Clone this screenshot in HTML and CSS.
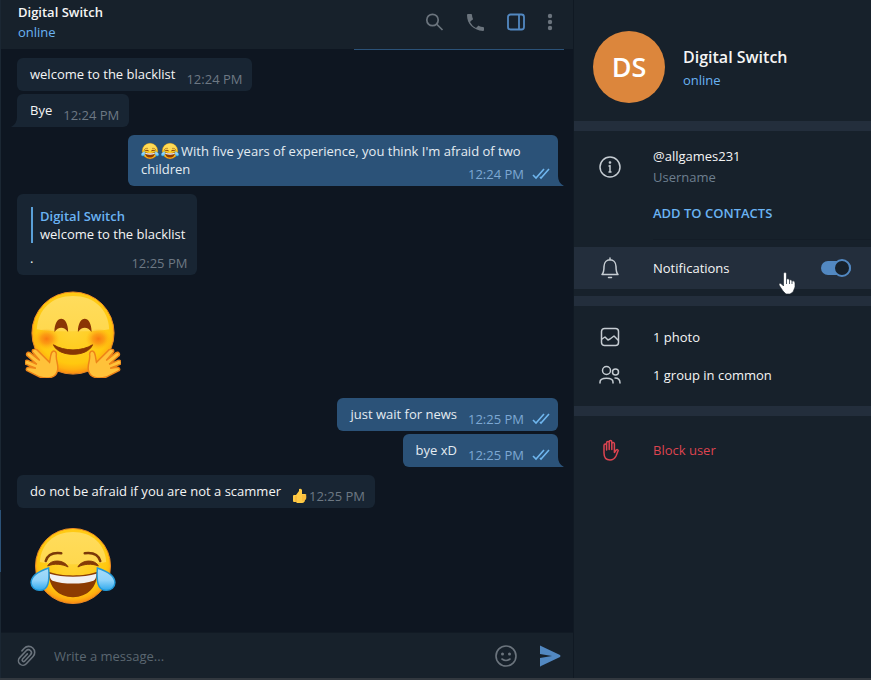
FILE: index.html
```
<!DOCTYPE html>
<html lang="en">
<head>
<meta charset="utf-8">
<title>Digital Switch</title>
<link rel="stylesheet" href="styles.css">
</head>
<body>
<svg class="defs" aria-hidden="true">
  <defs>
    <radialGradient id="face" cx="50%" cy="42%" r="58%">
      <stop offset="0" stop-color="#ffd53a"/><stop offset=".78" stop-color="#ffc80f"/><stop offset=".9" stop-color="#ffb010"/><stop offset="1" stop-color="#f98a12"/>
    </radialGradient>
    <linearGradient id="shine" x1="0" y1="0" x2="0" y2="1">
      <stop offset="0" stop-color="#ffdc5c"/><stop offset="1" stop-color="#ffd84e"/>
    </linearGradient>
    <radialGradient id="blush">
      <stop offset="0" stop-color="#f97a10"/><stop offset=".45" stop-color="#fb8d12" stop-opacity=".75"/><stop offset="1" stop-color="#ffae10" stop-opacity="0"/>
    </radialGradient>
    <linearGradient id="tear" x1="0" y1="0" x2="0" y2="1">
      <stop offset="0" stop-color="#a9dcf8"/><stop offset=".55" stop-color="#8fd3fa"/><stop offset="1" stop-color="#2fa9ec"/>
    </linearGradient>
    <symbol id="joy" viewBox="0 0 88 80">
      <circle cx="44" cy="40" r="38.500" fill="url(#face)" stroke="#ee8a22"/>
      <path d="M10 36C11 17 25 5 44 5s33 12 34 31c-12 3-56 3-68 0z" fill="url(#shine)"/>
      <path d="M16 35c2-7 8-9 16-8M72 35c-2-7-8-9-16-8" fill="none" stroke="#7a3808" stroke-width="2.500" stroke-linecap="round"/>
      <path d="M18 40c3-7 17-7 21 1-6-3-14-4-21-1zM49 41c4-8 18-8 21-1-7-3-15-2-21 1z" fill="#853b06" stroke="#853b06"/>
      <path d="M19 46c13 5 37 5 50 0 0 16-10 26-25 26S19 62 19 46z" fill="#8c3b02"/>
      <path d="M20 48c13 4 35 4 48 0 0 4-1 6-3 7-11 4-31 4-42 0-2-1-3-3-3-7z" fill="#f1f0f2"/>
      <path d="M19 42C10 45 1 49 1 57c0 5 4 8 9 8 9 0 10-10 9-23zM69 42c9 3 18 7 18 15 0 5-4 8-9 8-9 0-10-10-9-23z" fill="url(#tear)" stroke="#2398d6" stroke-width="1.500"/>
    </symbol>
    <symbol id="hand-left" viewBox="0 0 36 30">
      <path d="M31 3c-5-3-5 7-6 11L12 1C9-1 6 2 8 4l7 8L5 4C2 3 0 6 3 8l9 8-9-4c-3-1-5 3-2 4l10 4-7-1c-3 0-4 3-1 4l12 6c8 2 16 1 18-6 2-6-2-11-1-17 0-1 0-2-1-3z" fill="#ffc23a" stroke="#ee8418" stroke-width="1.500"/>
    </symbol>
    <symbol id="hug" viewBox="0 0 98 90">
      <circle cx="49" cy="43" r="42" fill="url(#face)" stroke="#ee8a22"/>
      <path d="M12 39C13 18 28 5 49 5s36 13 37 34c-15 3-59 3-74 0z" fill="url(#shine)"/>
      <ellipse cx="22" cy="49" rx="13" ry="11" fill="url(#blush)"/>
      <ellipse cx="75" cy="49" rx="13" ry="11" fill="url(#blush)"/>
      <path d="M30 42c0-18 14-18 14 0-4-6-10-6-14 0zM54 42c0-18 14-18 14 0-4-6-10-6-14 0z" fill="#8a3504"/>
      <path d="M29 55c11 7 29 7 40 0-5 13-35 13-40 0z" fill="#873504" stroke="#873504" stroke-linejoin="round"/>
      <use href="#hand-left" x="0" y="59" width="36" height="30"/>
      <use href="#hand-left" width="36" height="30" transform="translate(98 59) scale(-1 1)"/>
    </symbol>
    <symbol id="ticks" viewBox="0 0 18 12">
      <path d="M1 7l3 3 8-9M8 9l1 1 8-9" fill="none" stroke="#6fb6ee" stroke-width="1.600"/>
    </symbol>
  </defs>
</svg>
<div class="app">
  <main class="chat">
    <header class="chat-header">
      <div class="peer">
        <h1 class="peer-name">Digital Switch</h1>
        <span class="status">online</span>
      </div>
      <nav class="actions">
        <button class="icon-button" aria-label="Search"><svg width="20" height="20" viewBox="0 0 20 20" fill="none" stroke="#6b747d" stroke-width="1.700"><circle cx="8.500" cy="8" r="5.700"/><path d="M12.500 12l6 6"/></svg></button>
        <button class="icon-button" aria-label="Call"><svg width="20" height="20" viewBox="0 0 20 20" fill="#6b747d"><path d="M2 3q0-1 1-1h3q1 0 1 1 0 2 1 4 0 1-1 1L5 10q2 4 6 6l2-2q1-1 1 0 2 1 4 1 1 0 1 1v2q0 1-1 1C8 18 2 12 2 3z"/></svg></button>
        <button class="icon-button" aria-label="Toggle info panel"><svg width="20" height="20" viewBox="0 0 20 20" fill="none" stroke="#5288c1" stroke-width="1.800"><rect x="2" y="2.500" width="16" height="15" rx="2.500"/><path d="M13 3v14"/></svg></button>
        <button class="icon-button" aria-label="More"><svg width="6" height="20" viewBox="0 0 6 20" fill="#6b747d"><circle cx="3" cy="4" r="2.200"/><circle cx="3" cy="10" r="2.200"/><circle cx="3" cy="16" r="2.200"/></svg></button>
      </nav>
    </header>

    <section class="messages">
      <div class="cut-bubble"></div>
      <article class="bubble in">welcome to the blacklist<span class="meta">12:24 PM</span></article>
      <article class="bubble in tail">Bye<span class="meta">12:24 PM</span></article>
      <article class="bubble out tail group"><svg class="emoji" role="img" aria-label="joy"><use href="#joy"/></svg><svg class="emoji" role="img" aria-label="joy"><use href="#joy"/></svg>With five years of experience, you think I'm afraid of two children<span class="meta">12:24 PM<svg class="ticks"><use href="#ticks"/></svg></span></article>
      <article class="bubble in group">
        <blockquote class="reply"><strong class="reply-name">Digital Switch</strong>welcome to the blacklist</blockquote>.<span class="meta">12:25 PM</span></article>
      <svg class="sticker hug" role="img" aria-label="hugging face"><use href="#hug"/></svg>
      <article class="bubble out">just wait for news<span class="meta">12:25 PM<svg class="ticks"><use href="#ticks"/></svg></span></article>
      <article class="bubble out tail">bye xD<span class="meta">12:25 PM<svg class="ticks"><use href="#ticks"/></svg></span></article>
      <article class="bubble in group">do not be afraid if you are not a scammer<span class="meta"><svg class="thumb" viewBox="0 0 15 16" role="img" aria-label="thumbs up"><path d="M1 8q0-1 1-1h2l3-4V1q2-1 3 1v4h3q2 0 1 2 1 1 0 2 1 1-1 2 0 2-1 2 0 1-2 1H5l-1-1H2q-1 0-1-1z" fill="#ffcb45"/><path d="M10 8h4M10 10h4M10 12h3M4 8v6" stroke="#f0a02c" stroke-width=".7"/></svg>12:25 PM</span></article>
      <svg class="sticker joy" role="img" aria-label="face with tears of joy"><use href="#joy"/></svg>
    </section>

    <form class="composer">
      <button type="button" class="icon-button" aria-label="Attach"><svg width="22" height="24" viewBox="1 0 22 24" fill="none" stroke="#6b747d" stroke-width="1.600" stroke-linecap="round"><path transform="rotate(43 12 12)" d="M5.500 11V7.500a6 6 0 0 1 12 0v10a4.500 4.500 0 0 1-9 0V8a3 3 0 0 1 6 0v8.500a1.500 1.500 0 0 1-3 0V9.500"/></svg></button>
      <input class="message-input" type="text" placeholder="Write a message..." aria-label="Write a message">
      <button type="button" class="icon-button emoji-button" aria-label="Emoji"><svg width="24" height="24" viewBox="0 0 24 24" fill="none" stroke="#6b747d" stroke-width="1.600" stroke-linecap="round"><circle cx="12" cy="12" r="10"/><path d="M8 15q4 3 8 0"/><g fill="#6b747d" stroke="none"><circle cx="8.500" cy="10" r="1.500"/><circle cx="15.500" cy="10" r="1.500"/></g></svg></button>
      <button type="button" class="icon-button" aria-label="Send"><svg width="24" height="24" viewBox="0 0 24 24" fill="#5288c1"><path d="M2 2q0-1 1 0l19 9q1 1 0 2L3 22q-1 1-1 0v-8l12-2L2 10z"/></svg></button>
    </form>
    <span class="scroll-mark"></span>
  </main>

  <aside class="info">
    <section class="profile">
      <div class="avatar">DS</div>
      <div>
        <h2 class="profile-name">Digital Switch</h2>
        <span class="status">online</span>
      </div>
    </section>
    <section class="details">
      <div class="row row-tall">
        <svg class="row-icon" viewBox="0 0 24 24"><circle cx="12" cy="12" r="10"/><path d="M12 10.500v6.500M11 11H12M11 17h2"/><circle cx="12" cy="7.500" r=".6"/></svg>
        <div><div class="username">@allgames231</div><div class="caption">Username</div></div>
      </div>
      <a class="add-contact" href="#">ADD TO CONTACTS</a>
      <label class="row notifications">
        <svg class="row-icon" viewBox="0 0 24 24"><path d="M4 18.500c2-2 2-4 2-8 0-9 12-9 12 0 0 4 0 6 2 8zM12 2v2M10.500 21.500h3"/></svg>
        <span class="row-label">Notifications</span>
        <input class="toggle" type="checkbox" role="switch" checked>
        <svg class="pointer" viewBox="0 0 18 24" aria-hidden="true"><path d="M5.500 2.500Q7 0 8.500 2.500V8q2-1 3 1 2-1 2.500 1 3-1 3 2v4l-2 5-3 2H8l-3-3-4-6q0-3 2.500-1l2 2z" fill="#fff" stroke="#17212b" stroke-width=".6"/><path d="M8.500 8v5M11.500 9v4M14 10v3" stroke="#273342" stroke-width=".8"/></svg>
      </label>
    </section>
    <section class="shared">
      <a class="row" href="#"><svg class="row-icon" viewBox="0 0 24 24"><rect x="3.500" y="3.500" width="17" height="17" rx="3"/><path d="M4 14l3-2 3 3 2-1 4-3 4 4"/></svg><span>1 photo</span></a>
      <a class="row" href="#"><svg class="row-icon" viewBox="0 0 24 24"><circle cx="8.500" cy="7.500" r="4"/><circle cx="17.500" cy="9" r="3"/><path d="M2 20v-1c0-5 13-5 13 0v1M17 15c3 0 5 2 5 5"/></svg><span>1 group in common</span></a>
    </section>
    <section class="danger">
      <button class="row block"><svg class="row-icon" viewBox="0 0 24 24"><path d="M6 15V7.500q0-1.500 1.300-1.500t1.300 1.500V12V5q0-1.500 1.300-1.500T11.200 5v6.500V4q0-1.500 1.300-1.500T13.800 4v7.500V6q0-1.500 1.300-1.500T16.400 6v8.500l1.800-2.500q1.500-1 2 .5L18 18q-2 4-6 4-6 0-6-7z"/></svg><span>Block user</span></button>
    </section>
  </aside>
</div>
</body>
</html>
```
FILE: styles.css
```
*, *::after { box-sizing: border-box; }

body {
  margin: 0;
  background: #0e1621;
  color: #f5f5f5;
  font: 13px/18px "Open Sans", "Noto Sans", sans-serif;
}

h1, h2, blockquote { margin: 0; }
a { color: inherit; text-decoration: none; }

button {
  padding: 0;
  border: 0;
  background: none;
  color: inherit;
  font: inherit;
}

.defs { position: absolute; width: 0; height: 0; }

.app {
  display: flex;
  min-height: 100vh;
  background: #17212b;
  border-bottom: 2px solid #32383f;
}

.chat {
  position: relative;
  display: flex;
  flex: 1;
  flex-direction: column;
  min-width: 0;
  border-left: 1px solid #1b2733;
  border-right: 1px solid #101923;
}

.chat-header {
  display: flex;
  justify-content: space-between;
  height: 49px;
  padding: 2px 20px 0 17px;
}

.peer-name { font-size: 13px; font-weight: 600; line-height: 20px; }
.status { display: block; color: #6ab3f3; line-height: 20px; }

.actions { display: flex; align-items: center; gap: 21px; height: 40px; }
.icon-button { display: grid; place-items: center; }

.messages {
  display: flex;
  flex: 1;
  flex-direction: column;
  align-items: flex-start;
  gap: 3px;
  padding: 0 15px 24px 16px;
  background: #0e1621;
}

.cut-bubble {
  align-self: flex-end;
  width: 210px;
  height: 1px;
  margin: 0 -6px 5px 0;
  background: #2b5278;
}

.bubble {
  position: relative;
  display: flow-root;
  max-width: 430px;
  padding: 7px 10px 8px 13px;
  border-radius: 6px;
  background: #182533;
}

.out {
  align-self: flex-end;
  padding-right: 8px;
  background: #2b5278;
  color: #e4ecf2;
}

.group { margin-top: 5px; }

.meta {
  float: right;
  display: flex;
  align-items: center;
  margin: 5px 0 -5px 11px;
  color: #6d7883;
}

.out .meta { color: #7da8d3; }
.ticks { width: 18px; height: 12px; margin-left: 8px; }
.thumb { width: 15px; height: 16px; margin-right: 2px; }

.tail::after {
  content: "";
  position: absolute;
  bottom: 0;
  width: 12px;
  height: 10px;
  background: inherit;
}

.in.tail::after { left: -6px; clip-path: path("M6 0 Q6 7 0 10 H12 V0Z"); }
.out.tail::after { right: -6px; clip-path: path("M6 0 Q6 7 12 10 H0 V0Z"); }

.emoji { width: 18px; height: 18px; margin-right: 2px; vertical-align: top; }

.reply {
  margin: 6px 2px 6px 1px;
  padding-left: 7px;
  border-left: 2px solid #5aa0d8;
}

.reply-name { display: block; color: #6ab3f3; font-weight: 600; }

.sticker { display: block; margin-left: 8px; }
.hug { width: 96px; height: 88px; margin-top: 13px; margin-bottom: 16px; }
.joy { width: 86px; height: 78px; margin-top: 16px; margin-left: 13px; }

.composer {
  display: flex;
  align-items: center;
  height: 46px;
  padding: 0 11px 0 14px;
  gap: 17px;
  border-top: 1px solid #111a24;
}

.message-input {
  flex: 1;
  min-width: 0;
  padding: 0;
  border: 0;
  outline: 0;
  background: none;
  color: #f5f5f5;
  font: inherit;
}

.message-input::placeholder { color: #5b6771; opacity: 1; }
.emoji-button { margin-right: 3px; }

.scroll-mark {
  position: absolute;
  bottom: 106px;
  left: -1px;
  width: 1px;
  height: 62px;
  background: #2b5278;
}

.info { width: 297px; }

.profile {
  display: flex;
  align-items: center;
  gap: 18px;
  padding: 31px 19px 18px;
}

.avatar {
  display: grid;
  place-items: center;
  width: 72px;
  height: 72px;
  border-radius: 50%;
  background: #dc863c;
  color: #fff;
  font-size: 27px;
  font-weight: 600;
}

.profile-name { font-size: 16px; font-weight: 600; line-height: 26px; }

.details, .shared, .danger { border-top: 10px solid #232e3c; }
.details { padding: 15px 0 7px; }
.shared { padding: 12px 0; }
.danger { padding: 15px 0; }

.row {
  position: relative;
  display: flex;
  align-items: center;
  gap: 31px;
  width: 100%;
  height: 38px;
  padding: 0 20px 0 24px;
  text-align: left;
}

.row-tall { height: 42px; }
.username, .caption { line-height: 21px; }
.caption { color: #6d7f8f; }

.row-icon {
  width: 24px;
  height: 24px;
  fill: none;
  stroke: #c5ccd2;
  stroke-width: 1.5;
  stroke-linecap: round;
  stroke-linejoin: round;
}

.add-contact {
  display: block;
  margin: 8px 0 7px 79px;
  padding: 8px 0 17px;
  border-bottom: 1px solid #141d27;
  color: #6ab3f3;
  font-weight: 600;
}

.notifications { height: 42px; background: #232e3c; }
.row-label { flex: 1; }

.toggle {
  position: relative;
  appearance: none;
  width: 30px;
  height: 14px;
  margin: 0;
  border-radius: 7px;
  background: #5288c1;
}

.toggle::after {
  content: "";
  position: absolute;
  top: -2px;
  right: 0;
  width: 18px;
  height: 18px;
  border: 2px solid #5288c1;
  border-radius: 50%;
  background: #17212b;
}

.pointer {
  position: absolute;
  top: 24px;
  right: 75px;
  width: 18px;
  height: 24px;
}

.block { color: #dd4450; }
.block .row-icon { stroke: #dd4450; }
```
